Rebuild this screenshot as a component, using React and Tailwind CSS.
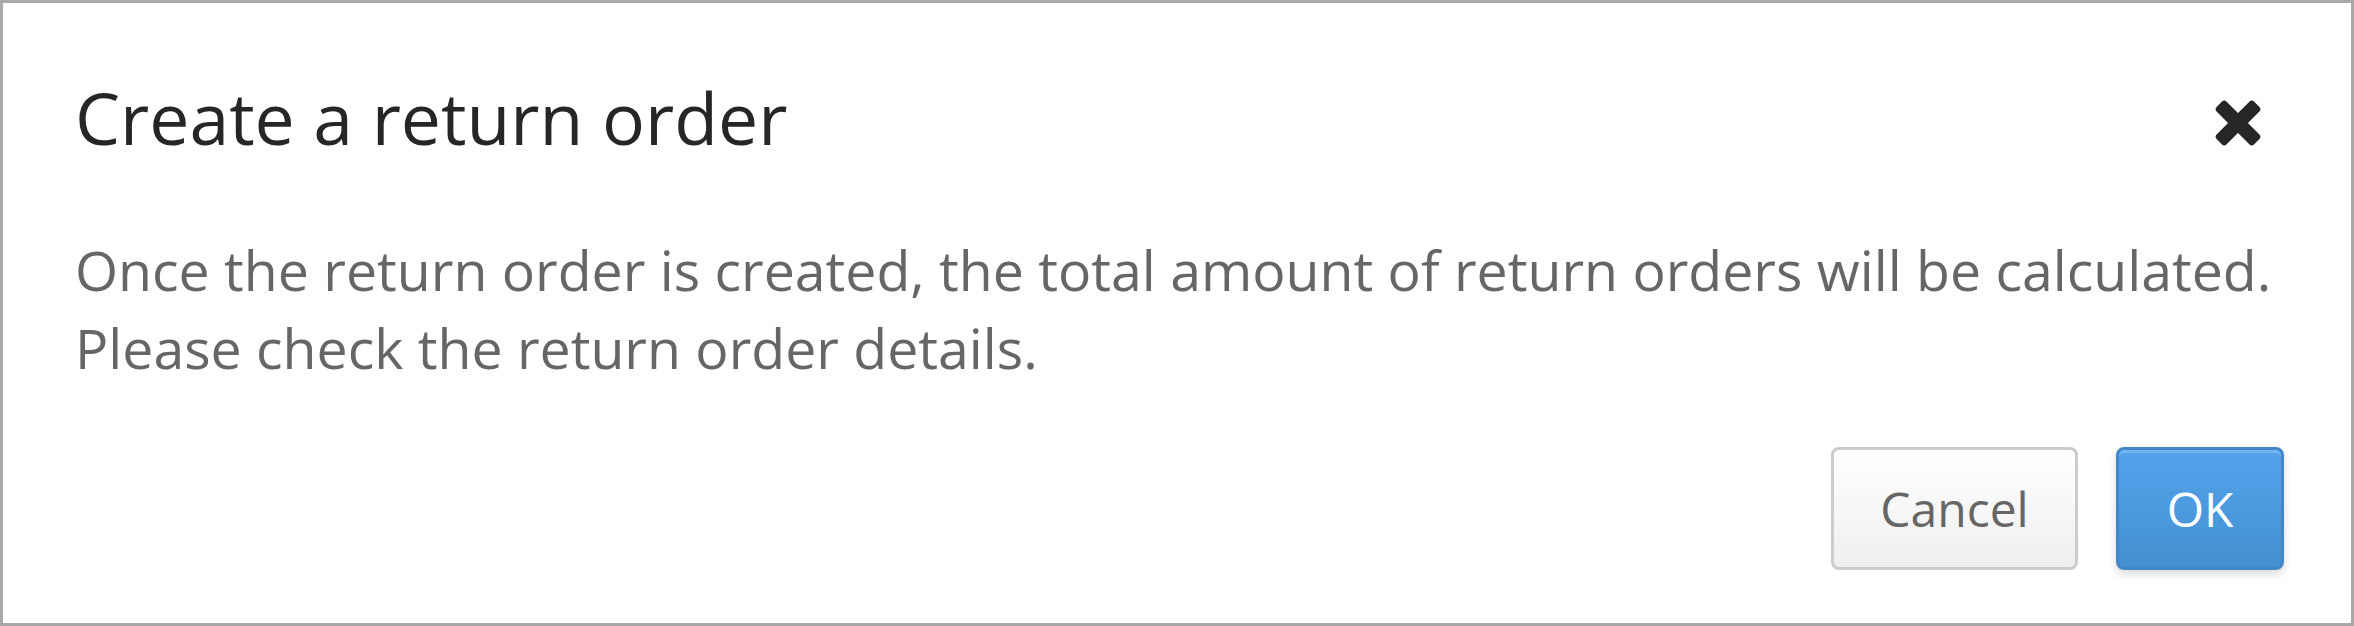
import React from "react";

const CloseIcon = () => (
  <svg width="48" height="48" viewBox="0 0 48 48" aria-hidden="true">
    <g transform="rotate(45 24 24)" fill="#262626">
      <rect x="-2.5" y="17" width="53" height="14" rx="3.5" />
      <rect x="17" y="-2.5" width="14" height="53" rx="3.5" />
    </g>
  </svg>
);

const App = () => {
  return (
    <div
      className="w-[2354px] h-[626px] bg-white border-[3px] border-[#a9a9a9] pl-[72px] pr-[67px] pt-[75px]"
      style={{ fontFamily: '"Open Sans", "Noto Sans", sans-serif' }}
    >
      {/* Header */}
      <div className="flex items-start justify-between">
        <h2 className="text-[71.5px] leading-[80px] text-[#262626] font-normal">Create a return order</h2>
        <button className="mt-[21px] mr-[22px]" aria-label="Close">
          <CloseIcon />
        </button>
      </div>

      {/* Body */}
      <p className="mt-[73px] text-[55.4px] leading-[78px] text-[#666666]">
        Once the return order is created, the total amount of return orders will be calculated.
        <br />
        Please check the return order details.
      </p>

      {/* Footer */}
      <div className="mt-[60px] flex justify-end gap-[38px]">
        <button className="w-[247px] h-[123px] rounded-[8px] border-[3px] border-[#cccccc] bg-gradient-to-b from-[#ffffff] to-[#efefef] text-[48px] text-[#666666]">
          Cancel
        </button>
        <button className="w-[168px] h-[123px] rounded-[8px] border-[3px] border-[#4386c6] bg-gradient-to-b from-[#53a4ec] to-[#448fd1] text-[48px] text-white shadow-[inset_0_3px_0_rgba(255,255,255,0.18),0_4px_8px_rgba(0,0,0,0.15)]">
          OK
        </button>
      </div>
    </div>
  );
};

export default App;
